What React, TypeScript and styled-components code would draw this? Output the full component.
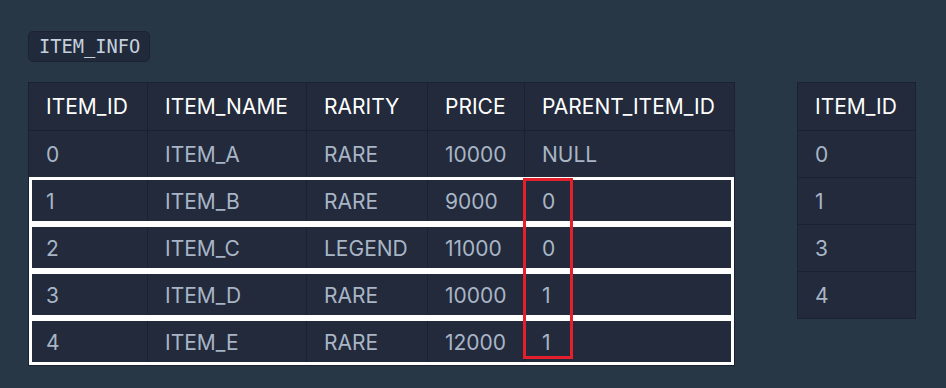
import styled, { createGlobalStyle } from 'styled-components'

const GlobalStyle = createGlobalStyle`
  html, body {
    margin: 0;
    padding: 0;
    background: #283746;
  }
  body {
    font-family: Inter, 'Noto Sans', sans-serif;
  }
`

const Page = styled.div`
  padding: 31px 28px 0;
`

const Tag = styled.code`
  display: inline-block;
  height: 31px;
  line-height: 29px;
  box-sizing: border-box;
  padding: 0 9px 0 10px;
  background: #212a3a;
  border: 1px solid #1b2331;
  border-radius: 5px;
  color: #c5d0de;
  font-family: 'DejaVu Sans Mono', monospace;
  font-size: 18.7px;
`

const Tables = styled.div`
  display: flex;
  align-items: flex-start;
  gap: 62px;
  margin-top: 20px;
`

const TableBox = styled.div`
  position: relative;
  background: #222a3b;
  border: 1px solid #1a2130;
`

const Row = styled.div<{ cols: string; marked?: boolean }>`
  display: grid;
  grid-template-columns: ${({ cols }) => cols};
  height: 47px;
  border-top: 1px solid #1a2130;
  box-sizing: border-box;
  outline: ${({ marked }) => (marked ? '3px solid #ffffff' : 'none')};
  outline-offset: -3px;

  &:first-child {
    border-top: none;
  }
`

const Cell = styled.div<{ head?: boolean }>`
  display: flex;
  align-items: center;
  padding-left: 17px;
  border-left: 1px solid #1a2130;
  color: ${({ head }) => (head ? '#ffffff' : '#a8b5c6')};
  font-size: 21px;
  white-space: nowrap;

  &:first-child {
    border-left: none;
  }
`

// red frame drawn over the PARENT_ITEM_ID values
const Marker = styled.div`
  position: absolute;
  left: 494px;
  top: 95px;
  width: 44px;
  height: 175px;
  border: 3px solid #e3202b;
`

const itemCols = '118px 159px 121px 97px 210px'
const itemHead = ['ITEM_ID', 'ITEM_NAME', 'RARITY', 'PRICE', 'PARENT_ITEM_ID']
const items = [
  ['0', 'ITEM_A', 'RARE', '10000', 'NULL'],
  ['1', 'ITEM_B', 'RARE', '9000', '0'],
  ['2', 'ITEM_C', 'LEGEND', '11000', '0'],
  ['3', 'ITEM_D', 'RARE', '10000', '1'],
  ['4', 'ITEM_E', 'RARE', '12000', '1'],
]
const resultIds = ['0', '1', '3', '4']

const App = () => {
  return (
    <Page>
      <GlobalStyle />
      <Tag>ITEM_INFO</Tag>
      <Tables>
        <TableBox>
          <Row cols={itemCols}>
            {itemHead.map(h => (
              <Cell head key={h}>
                {h}
              </Cell>
            ))}
          </Row>
          {items.map(row => (
            <Row cols={itemCols} marked={row[4] !== 'NULL'} key={row[0]}>
              {row.map((v, i) => (
                <Cell key={i}>{v}</Cell>
              ))}
            </Row>
          ))}
          <Marker />
        </TableBox>
        <TableBox>
          <Row cols='117px'>
            <Cell head>ITEM_ID</Cell>
          </Row>
          {resultIds.map(id => (
            <Row cols='117px' key={id}>
              <Cell>{id}</Cell>
            </Row>
          ))}
        </TableBox>
      </Tables>
    </Page>
  )
}

export default App
